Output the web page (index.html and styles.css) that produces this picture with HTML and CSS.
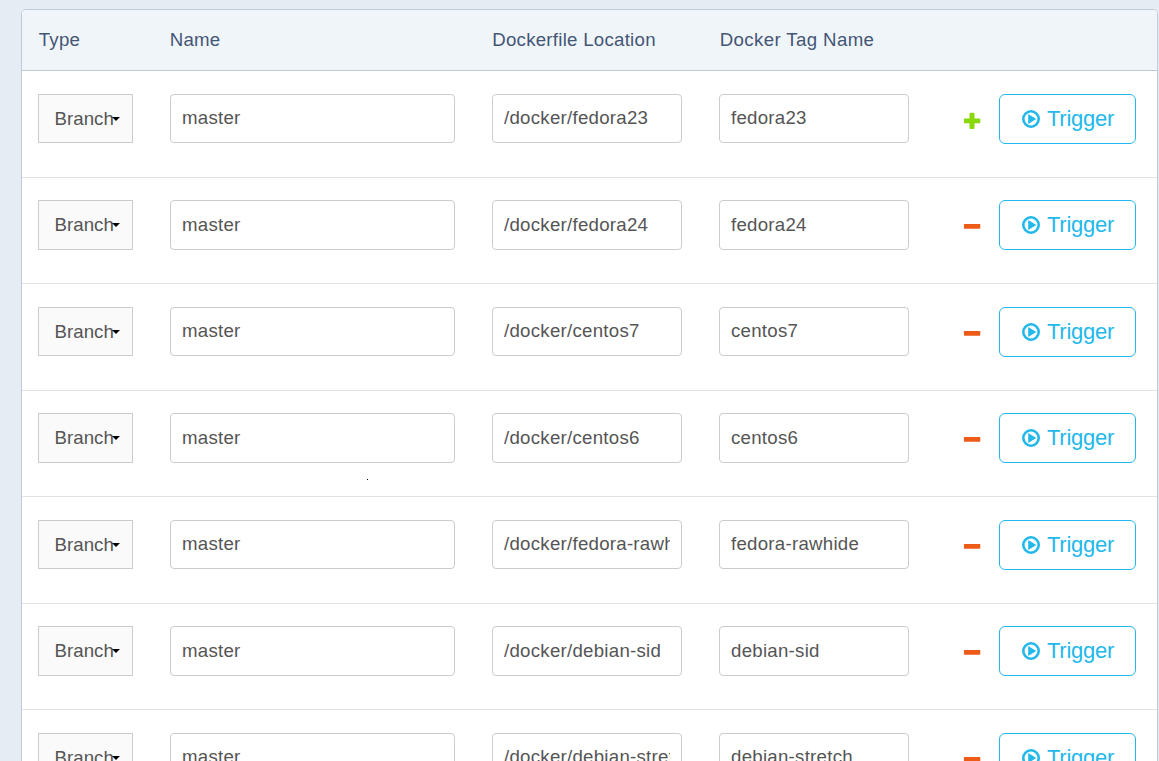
FILE: index.html
```html
<!DOCTYPE html>
<html lang="en">
<head>
<meta charset="utf-8">
<title>Build Settings</title>
<link rel="stylesheet" href="styles.css">
</head>
<body>
<svg class="defs" width="0" height="0">
  <symbol id="play" viewBox="0 0 18 18"><circle cx="9" cy="9" r="7.7" fill="none" stroke="currentColor" stroke-width="2.6"/><path d="M6.200 3.900 14.300 9 6.200 14.100z" fill="currentColor"/></symbol>
  <symbol id="plus" viewBox="0 0 18 18"><path d="M7.300 .8h3.400q.8 0 .8.8V6.600H16.500q.8 0 .8.8v3q0 .8-.8.8H11.500V16.200q0 .8-.8.8H7.300q-.8 0-.8-.8V11.200H1.700q-.8 0-.8-.8V7.400q0-.8.8-.8H6.500V1.600Q6.500.8 7.300.8z" fill="currentColor"/></symbol>
  <symbol id="minus" viewBox="0 0 18 18"><rect x=".9" y="5.900" width="16.400" height="4.800" rx=".7" fill="currentColor"/></symbol>
</svg>
<main class="panel">
  <div class="head grid"><span>Type</span><span>Name</span><span>Dockerfile Location</span><span>Docker Tag Name</span></div>
  <div id="rows"></div>
</main>
<span class="speck"></span>
<script src="rows.js"></script>
</body>
</html>
```
FILE: rows.js
```
const builds = [
  ['/docker/fedora23', 'fedora23'],
  ['/docker/fedora24', 'fedora24'],
  ['/docker/centos7', 'centos7'],
  ['/docker/centos6', 'centos6'],
  ['/docker/fedora-rawhide', 'fedora-rawhide'],
  ['/docker/debian-sid', 'debian-sid'],
  ['/docker/debian-stretch', 'debian-stretch']
];
document.getElementById('rows').innerHTML = builds.map(([path, tag], i) => {
  const action = i ? 'minus' : 'plus';
  return `<div class="row grid">
    <div class="select"><span>Branch</span><i class="caret"></i></div>
    <div class="field"><span>master</span></div>
    <div class="field"><span>${path}</span></div>
    <div class="field"><span>${tag}</span></div>
    <svg class="action ${action}"><use href="#${action}"/></svg>
    <button class="trigger"><svg class="play"><use href="#play"/></svg>Trigger</button>
  </div>`;
}).join('');
```
FILE: styles.css
```css
* { box-sizing: border-box; }
body {
  margin: 0;
  padding: 9px 1px 0 21px;
  height: 761px;
  overflow: hidden;
  background: #e5ecf4;
  font: 18.67px/24px "Liberation Sans", Arial, sans-serif;
  letter-spacing: .26px;
  color: #555;
}
.defs { display: block; }
.panel {
  width: 1137px;
  background: #fff;
  border: 1px solid #c0cad9;
  border-radius: 5px 5px 0 0;
  overflow: hidden;
}
.grid {
  display: grid;
  padding-left: 16px;
}
.head {
  grid-template-columns: 131px 322.5px 227.5px 190px;
  height: 61.4px;
  padding: 17.5px 0 0 16.700px;
  background: #f0f5fa;
  box-shadow: inset 0 -1px #c0cad9;
  color: #445675;
}
.head span:last-child { letter-spacing: .38px; }
.row {
  height: 106.5px;
  padding-top: 22.5px;
  border-bottom: 1px solid #e1e2e3;
  grid-template-columns: 132px 322px 227px 244px 36px 137px;
}
.select, .field {
  height: 49.3px;
  border: 1px solid #ccc;
  white-space: nowrap;
}
.select {
  display: flex;
  align-items: center;
  width: 95px;
  padding: 0 0 0 15.500px;
  background: #fafafa;
  letter-spacing: .05px;
}
.select span { width: 59px; }
.caret {
  margin-left: -1.500px;
  border: 4px solid transparent;
  border-top-color: #000;
  border-bottom: 0;
}
.field {
  width: 190px;
  padding: 11.200px 11px 0;
  border-radius: 4px;
  background: #fff;
}
.field:nth-child(2) { width: 285px; }
.field span { display: block; overflow: hidden; }
.action { width: 18px; height: 18px; margin-top: 18px; }
.plus { color: #88d80a; }
.minus { color: #ee5b17; }
.trigger {
  display: flex;
  align-items: center;
  width: 137px;
  height: 50px;
  padding: 0 0 0 22px;
  border: 1px solid #22b8eb;
  border-radius: 6px;
  background: #fff;
  color: #22b8eb;
  font: 22px/26px "Liberation Sans", Arial, sans-serif;
  letter-spacing: -.25px;
}
.play { width: 18px; height: 18px; margin-right: 7px; }
.speck {
  position: absolute;
  left: 367px;
  top: 479px;
  width: 1px;
  height: 1px;
  background: #000;
}
```
